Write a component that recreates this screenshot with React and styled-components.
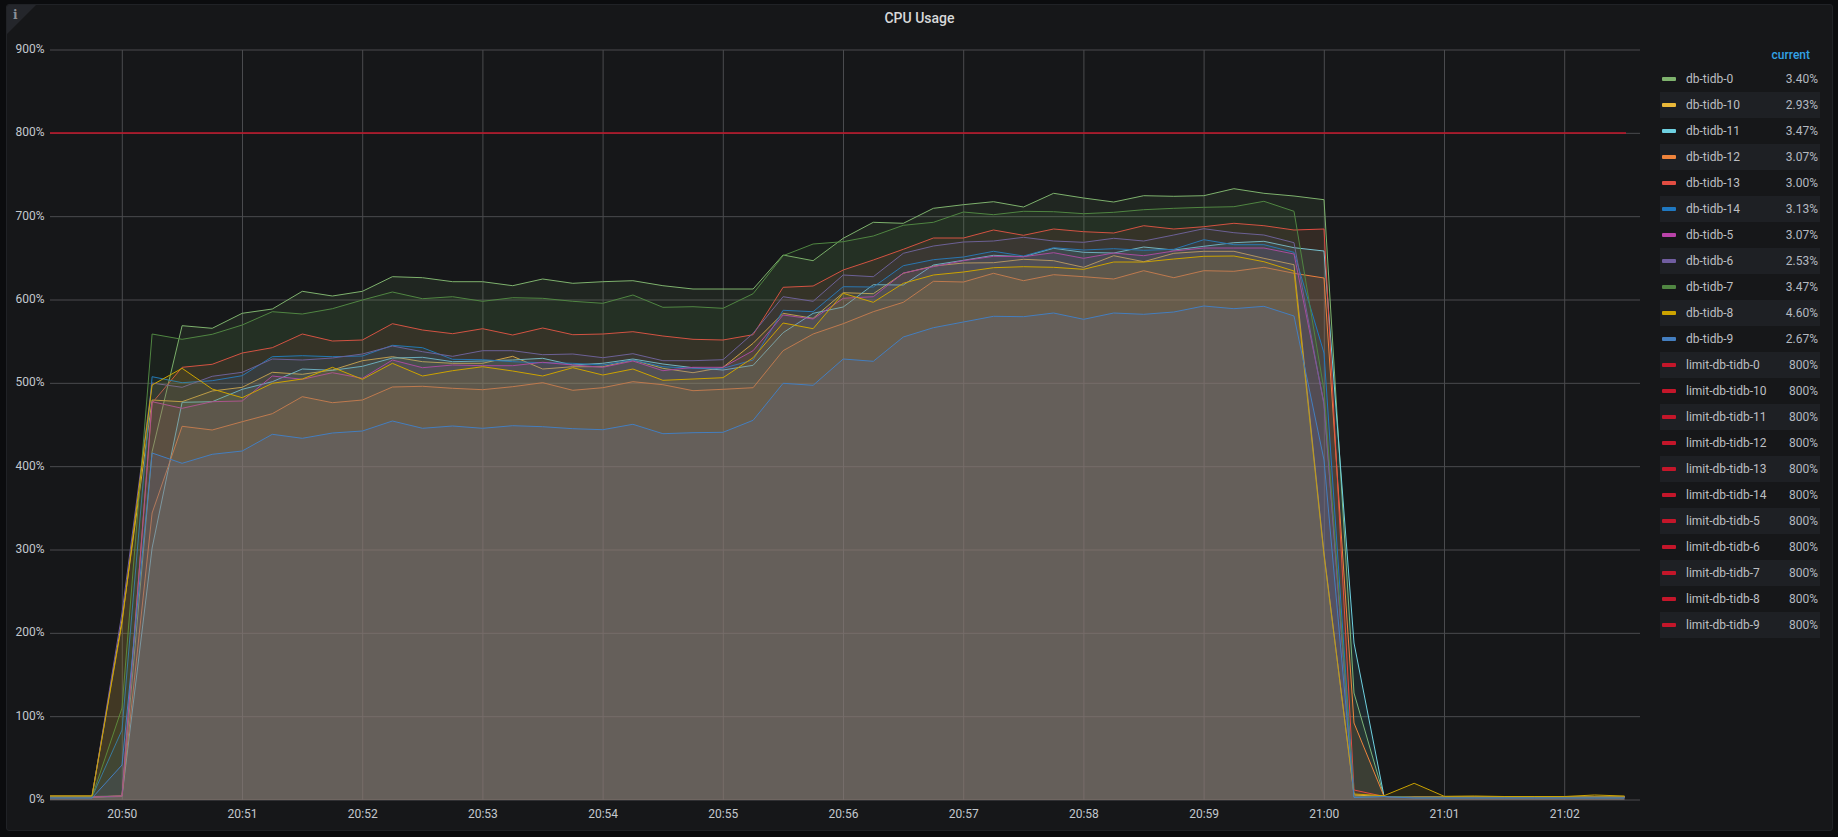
import React from "react";
import styled, { createGlobalStyle } from "styled-components";

const Global = createGlobalStyle`
  html, body { margin: 0; padding: 0; background: #0b0c0e; }
  body { font-family: Roboto, "Liberation Sans", sans-serif; }
`;

const Page = styled.div`
  box-sizing: border-box;
  width: 1838px;
  height: 837px;
  padding: 4px 5px 6px 6px;
  background: #0b0c0e;
  overflow: hidden;
`;
const Panel = styled.section`
  position: relative;
  box-sizing: border-box;
  height: 100%;
  display: flex;
  flex-direction: column;
  background: #161719;
  border: 1px solid #202226;
  border-radius: 3px;
  overflow: hidden;
`;
const Corner = styled.div`
  position: absolute;
  left: 0;
  top: 0;
  width: 0;
  height: 0;
  border-style: solid;
  border-width: 29px 29px 0 0;
  border-color: #24262b transparent transparent transparent;
`;
const CornerMark = styled.span`
  position: absolute;
  left: 6px;
  top: 3px;
  font: 700 12px/14px "DejaVu Serif", "Liberation Serif", serif;
  color: #8b9097;
`;
const Title = styled.h2`
  flex: none;
  height: 35px;
  margin: 0;
  padding-top: 4px;
  box-sizing: border-box;
  text-align: center;
  font: 500 14px/18px Roboto, sans-serif;
  color: #d8d9da;
`;
const Body = styled.div`
  flex: 1;
  min-height: 0;
  display: flex;
`;
const Plot = styled.svg`
  flex: none;
  display: block;
  width: 1643px;
  height: 786px;
`;
const AxisLabel = styled.text`
  font: 400 12px Roboto, sans-serif;
  fill: #c3c8ce;
`;
const Legend = styled.div`
  flex: none;
  width: 182px;
  padding-left: 10px;
  box-sizing: border-box;
`;
const LegendHead = styled.div`
  height: 26px;
  box-sizing: border-box;
  padding: 6px 22px 0 0;
  text-align: right;
  font: 500 12px/18px Roboto, sans-serif;
  color: #33a2e5;
`;
const Row = styled.div`
  width: 160px;
  height: 26px;
  box-sizing: border-box;
  padding: 0 2px;
  display: flex;
  align-items: center;
  gap: 10px;
  font: 400 12px/18px Roboto, sans-serif;
  background: ${(p) => (p.$striped ? "#1e2024" : "transparent")};
`;
const Swatch = styled.i`
  flex: none;
  width: 14px;
  height: 4px;
  border-radius: 1px;
  background: ${(p) => p.$color};
`;
const Name = styled.span`
  flex: 1;
  color: #bdbfc2;
`;
const Value = styled.span`
  color: #b4b9c0;
`;

const zA = (v) => 285 + v / 3;
const zC = (v) => 170 + v / 3;
const xOf = (k) => 122 + 30.05 * k;

const S = [
  { n: "db-tidb-0", c: "#7EB26D", v: "3.40%", h: [796.5, 796.5, 796, 451.7],
    a: [122,130,85,72,19,33,19,-25,-22,-10,-10,2,-18,-5,-10,-13], b: [2,12,12,12,-90,-73],
    m: [205,157,160,115,104,95,111,70,84,96,77,79,77,56,70,78], e: [199.7, 693], t: 797 },
  { n: "db-tidb-10", c: "#EAB839", v: "2.93%", h: [796, 796, 620, 400],
    a: [350,318,307,262,268,255,227,215,230,235,235,214,252,245,245,225], b: [250,263,247,175,85,100],
    m: [368,371,310,288,279,278,268,272,292,257,275,250,244,244,265,284], e: [553, 795], t: 796.5 },
  { n: "db-tidb-11", c: "#6ED0E0", v: "3.47%", h: [797, 797, 796.5, 548],
    a: [352,350,313,290,252,256,244,219,217,230,228,225,220,240,235,222], b: [237,248,255,241,143,85],
    m: [411,344,345,285,271,256,260,235,247,249,231,240,229,218,214,233], e: [251, 643], t: 797 },
  { n: "db-tidb-12", c: "#EF843C", v: "3.07%", h: [797, 797, 796, 513],
    a: [424,435,410,386,335,353,345,306,304,310,314,305,293,316,308,290], b: [299,317,313,308,197,147],
    m: [461,425,397,334,336,310,332,314,320,327,302,323,302,304,292,310], e: [278, 723], t: 797 },
  { n: "db-tidb-13", c: "#E24D42", v: "3.00%", h: [797, 797, 796, 403],
    a: [247,238,204,188,147,168,165,116,135,146,131,150,129,149,147,140], b: [153,163,165,149,7,3],
    m: [300,270,238,204,204,180,196,177,185,189,167,177,170,160,167,180], e: [229, 790], t: 797 },
  { n: "db-tidb-14", c: "#1F78C1", v: "3.13%", h: [797, 797, 730, 376.7],
    a: [293,287,272,215,212,215,213,181,188,223,224,230,233,235,240,225], b: [245,250,250,225,76,80],
    m: [350,351,287,269,261,244,258,233,240,236,241,238,209,224,224,247], e: [353, 796.5], t: 797.5 },
  { n: "db-tidb-5", c: "#BA43A9", v: "3.07%", h: [797, 797, 796, 401.7],
    a: [370,350,348,273,283,263,280,225,248,240,242,242,232,240,247,228], b: [257,247,247,197,90,102],
    m: [385,380,309,290,272,259,260,248,265,249,257,243,234,234,234,252], e: [403, 797], t: 797.5 },
  { n: "db-tidb-6", c: "#705DA0", v: "2.53%", h: [797, 797, 613, 383],
    a: [307,274,262,222,225,219,207,183,200,214,197,197,209,207,218,206], b: [227,227,224,145,35,49],
    m: [315,320,250,228,216,213,202,213,217,205,213,195,176,188,195,218], e: [405, 797], t: 797.5 },
  { n: "db-tidb-7", c: "#508642", v: "3.47%", h: [797, 797, 708, 334],
    a: [163,148,120,80,87,71,45,21,41,35,49,38,40,49,55,30], b: [67,65,70,26,-88,-123],
    m: [215,198,166,157,126,134,124,125,131,127,119,115,112,110,94,124], e: [390, 797], t: 797 },
  { n: "db-tidb-8", c: "#CCA300", v: "4.60%", h: [796, 796, 623, 385],
    a: [250,312,338,295,282,247,283,235,273,257,245,258,273,248,270,252], b: [286,282,278,218,114,131],
    m: [370,397,340,315,306,293,290,292,298,276,276,267,259,258,275,303], e: [555, 794], t: 796.3 },
  { n: "db-tidb-9", c: "#447EBF", v: "2.67%", fc: "#5C76BF", f: 0.13, h: [798, 798, 765, 453],
    a: [535,508,498,448,460,444,438,408,430,423,430,422,425,431,434,418], b: [446,443,442,406,295,301],
    m: [567,574,501,473,456,439,440,429,448,429,433,426,408,416,409,438], e: [460, 797.5], t: 798 },
];

const buildPoints = (s) => {
  const ys = [
    ...s.h.slice(1),
    ...s.a.map(zA),
    ...s.b.map(zA),
    ...s.m.map(zC),
    ...s.e,
  ];
  const pts = [[50, s.h[0]]];
  ys.forEach((y, i) => pts.push([xOf(i - 1), y]));
  const isGold = s.n === "db-tidb-8";
  const tail = isGold
    ? [795.7, 783.3, 796.3, 796, 796.5, 796.5, 796.5, 795, 796]
    : [796.5, s.t, s.t, s.t, s.t, s.t, s.t, s.t, s.t];
  tail.forEach((y, i) => pts.push([xOf(42 + i), y]));
  return pts;
};

const LIMITS = ["0", "10", "11", "12", "13", "14", "5", "6", "7", "8", "9"];
const PCT = [0, 100, 200, 300, 400, 500, 600, 700, 800, 900];
const TIMES = ["20:50","20:51","20:52","20:53","20:54","20:55","20:56","20:57","20:58","20:59","21:00","21:01","21:02"];
const GRID = "#4a4b4e";

function Chart() {
  return (
    <Plot viewBox="7 40 1643 786">
      {PCT.map((p) => {
        const y = 800 - p * 0.83333;
        return <line key={p} x1="50" x2="1640" y1={y} y2={y} stroke={GRID} strokeWidth="1" />;
      })}
      {TIMES.map((t, i) => {
        const x = 122.3 + 120.2 * i;
        return <line key={t} x1={x} x2={x} y1="50" y2="800" stroke={GRID} strokeWidth="1" />;
      })}
      {S.map((s) => {
        const pts = buildPoints(s);
        const line = pts.map((p) => p[0].toFixed(1) + "," + p[1].toFixed(1)).join(" ");
        const last = pts[pts.length - 1][0];
        return (
          <g key={s.n}>
            <polygon points={"50,800 " + line + " " + last + ",800"} fill={s.fc || s.c} fillOpacity={s.f || 0.1} />
            <polyline points={line} fill="none" stroke={s.c} strokeWidth="1" strokeLinejoin="round" />
          </g>
        );
      })}
      <line x1="50" x2="1626" y1="133" y2="133" stroke="#C4162A" strokeWidth="1.6" />
      {PCT.map((p) => (
        <AxisLabel key={p} x="44.5" y={800 - p * 0.83333 + 3} textAnchor="end">{p}%</AxisLabel>
      ))}
      {TIMES.map((t, i) => (
        <AxisLabel key={t} x={122.3 + 120.2 * i} y="818" textAnchor="middle">{t}</AxisLabel>
      ))}
    </Plot>
  );
}

export default function App() {
  const rows = [
    ...S.map((s) => ({ n: s.n, c: s.c, v: s.v })),
    ...LIMITS.map((l) => ({ n: "limit-db-tidb-" + l, c: "#C4162A", v: "800%" })),
  ];
  return (
    <Page>
      <Global />
      <Panel>
        <Corner />
        <CornerMark>i</CornerMark>
        <Title>CPU Usage</Title>
        <Body>
          <Chart />
          <Legend>
            <LegendHead>current</LegendHead>
            {rows.map((r, i) => (
              <Row key={r.n} $striped={i % 2 === 1}>
                <Swatch $color={r.c} />
                <Name>{r.n}</Name>
                <Value>{r.v}</Value>
              </Row>
            ))}
          </Legend>
        </Body>
      </Panel>
    </Page>
  );
}
